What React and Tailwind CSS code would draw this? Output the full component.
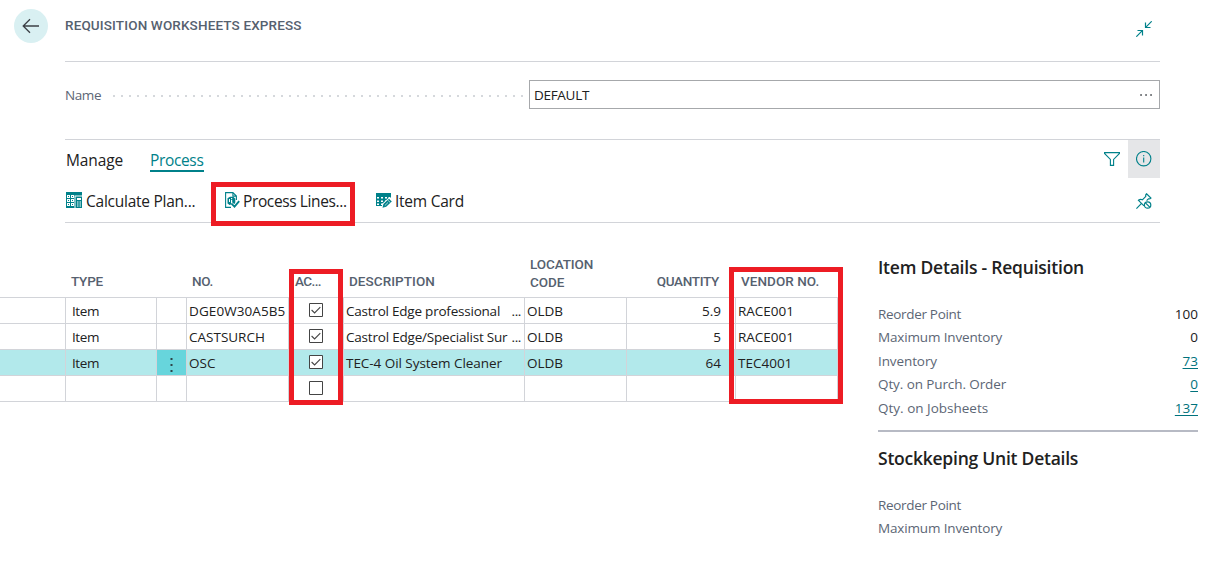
import React from "react";

const TEAL = "#00818a";

function BackIcon() {
  return (
    <svg width="18" height="16" viewBox="0 0 18 16" fill="none" stroke="#3c4046" strokeWidth="1.3">
      <path d="M17 8H1.5M8 1.2 1.2 8 8 14.8" />
    </svg>
  );
}

function CollapseIcon() {
  return (
    <svg width="16" height="16" viewBox="0 0 16 16" fill="none" stroke={TEAL} strokeWidth="1.2">
      <path d="M15.7.3 9.7 6.3M9.5 1.5v5h5M.3 15.7l6-6M1.5 9.5h5v5" />
    </svg>
  );
}

function FilterIcon() {
  return (
    <svg width="16" height="14" viewBox="0 0 16 14" fill="none" stroke={TEAL} strokeWidth="1.1">
      <path d="M.5.6h15v.9L9.6 7.4v6H6.4v-6L.5 1.500z" />
    </svg>
  );
}

function InfoIcon() {
  return (
    <svg width="16" height="16" viewBox="0 0 16 16" fill="none" stroke={TEAL} strokeWidth="1.1">
      <circle cx="7.7" cy="7.700" r="7.2" />
      <path d="M7.700 6.500v5M7.700 4v1.300" />
    </svg>
  );
}

function UnpinIcon() {
  return (
    <svg width="16" height="16" viewBox="0 0 16 16" fill="none" stroke={TEAL} strokeWidth="1.2">
      <path d="M.4 15.600 5.300 10.600M2 6.800l6 6M2.500 7.200c1.400-.9 2.700-.9 3.900-.4L9.800 3.400c-.3-1 0-1.900.8-2.600l4.300 4.300c-.7.800-1.500 1-2.500.8l-1.800 1.700" />
      <circle cx="11.600" cy="12" r="3.200" />
      <path d="m9.400 9.800 4.400 4.400" />
    </svg>
  );
}

function CalculateIcon() {
  return (
    <svg width="16" height="16" viewBox="0 0 16 16">
      <path fill={TEAL} d="M0 0h16v4H0zM0 4h9v12H0z" />
      <path fill="#fff" d="M1 3h3v3H1zM5 3h3v3H5zM1 7h3v3H1zM5 7h3v3H5zM1 11h3v3H1zM5 11h3v3H5z" />
      <path fill={TEAL} d="M2 4h1v1H2zM6 4h1v1H6zM2 8h1v1H2zM6 8h1v1H6zM2 12h1v1H2zM6 12h1v1H6z" />
      <path fill="#fff" d="M8.500 3.500H16V16H8.500z" />
      <path fill={TEAL} d="M9.500 4.500H16V16H9.500z" />
      <path fill="#fff" d="M11 6h4v2h-4zM11 9.500h1v1h-1zM12.500 9.500h1v1h-1zM14 9.500h1v1h-1zM11 11.500h1v1h-1zM12.500 11.500h1v1h-1zM14 11.500h1v1h-1zM11 13.500h1v1h-1zM12.500 13.500h1v1h-1zM14 13.500h1v1h-1z" />
    </svg>
  );
}

function ProcessIcon() {
  return (
    <svg width="15" height="16" viewBox="0 0 15 16" fill="none">
      <path stroke={TEAL} strokeWidth="1.100" d="M6 15.400H.6V.6h7.300l3.500 3.500v4M7.900.6v3.500h3.500" />
      <path fill={TEAL} d="M2.500 6.200 5 4.800h3.300l2 2v4.700L7.500 13H4.600l-2.100-1.600z" />
      <path fill="#fff" d="M4 7h1v3H4zM6 6h1.200v1.200H6zM6 8h1.200v3H6z" />
      <path stroke="#fff" strokeWidth="3" d="m6.500 11.500 2.800 3 4.600-5.500" />
      <path stroke={TEAL} strokeWidth="1.800" d="m6.500 11.700 3 3 4.700-5.600" />
    </svg>
  );
}

function ItemCardIcon() {
  return (
    <svg width="16" height="15" viewBox="0 0 16 15" fill="none">
      <path fill={TEAL} d="M0 0h15v13H0z" />
      <path fill="#fff" d="M1 4h2v1.500H1zM5 4h2v1.500H5zM9 4h2v1.500H9zM12.500 4h1.500v1.500h-1.500zM1 7.500h2V9H1zM5 7.500h2V9H5zM9 7.500h1V9H9zM1 10.500h2V12H1zM5 10.500h2V12H5z" />
      <path fill="#fff" d="M5.500 15 6.500 10.500 13 4.500h3v9.500l-2 1z" />
      <path fill={TEAL} d="m6.500 14.700.9-3.600 5.600-5.300 2.800 2.600-5.600 5.300z" />
      <path stroke="#fff" strokeWidth=".7" d="m11.600 7 2.700 2.500M8.800 12.600l3.200-3.100" />
    </svg>
  );
}

function Checkbox({ checked }) {
  return (
    <svg width="14" height="14" viewBox="0 0 14 14" fill="none" className="-mt-px -ml-px">
      <path fill="#fff" stroke="#444" d="M.5.5h13v13H.5z" />
      {checked && <path stroke="#444" strokeWidth="1.100" d="m2.600 7 3 3 5.700-5.900" />}
    </svg>
  );
}

function HeadCell({ className, children }) {
  return (
    <div className={`flex shrink-0 items-end pb-[7px] font-[Roboto] text-[13.5px] leading-[18px] font-medium text-[#56616f] ${className}`}>
      {children}
    </div>
  );
}

function Cell({ className = "", children }) {
  return (
    <div className={`flex shrink-0 items-center border-r border-[#d2d4d9] whitespace-pre ${className}`}>
      {children}
    </div>
  );
}

const rows = [
  { type: "Item", no: "DGE0W30A5B5", noCls: "tracking-[0.09px]", ok: true, desc: "Castrol Edge professional", descCls: "tracking-[-0.22px]", more: true, loc: "OLDB", qty: "5.9", vendor: "RACE001" },
  { type: "Item", no: "CASTSURCH", noCls: "tracking-[0px]", ok: true, desc: "Castrol Edge/Specialist Sur", descCls: "tracking-[-0.2px]", more: true, loc: "OLDB", qty: "5", vendor: "RACE001" },
  { type: "Item", no: "OSC", noCls: "tracking-[0px]", ok: true, desc: "TEC-4 Oil System Cleaner", descCls: "tracking-[-0.05px]", loc: "OLDB", qty: "64", vendor: "TEC4001", selected: true },
  { ok: false },
];

function Row({ r }) {
  return (
    <div className={`flex h-[26px] border-b border-[#d2d4d9] ${r.selected ? "bg-[#b2e9eb]" : ""}`}>
      <Cell className="w-[66px]" />
      <Cell className="w-[91px] pl-[6px] tracking-[-0.4px]">{r.type}</Cell>
      <Cell className={`w-[30px] justify-center ${r.selected ? "bg-[#67d5dc]" : ""}`}>
        {r.selected && (
          <svg width="3" height="14" viewBox="0 0 3 14" className="mt-[5px]" fill="#2f4448">
            <path d="M.5 0h2v2h-2zM.5 6h2v2h-2zM.5 12h2v2h-2z" />
          </svg>
        )}
      </Cell>
      <Cell className={`w-[102px] pl-[2px] ${r.noCls || ""}`}>{r.no}</Cell>
      <Cell className="w-[55px] justify-center">
        <Checkbox checked={r.ok} />
      </Cell>
      <Cell className="w-[181px] justify-between pr-[3px] pl-[2px]">
        <span className={r.descCls}>{r.desc}</span>
        {r.more && <span className="tracking-[-0.4px]">...</span>}
      </Cell>
      <Cell className="w-[102px] pl-[2px]">{r.loc}</Cell>
      <Cell className="w-[109px] justify-end pr-[14px]">{r.qty}</Cell>
      <Cell className="w-[102px] pl-[2px]">{r.vendor}</Cell>
    </div>
  );
}

function Fact({ label, value, link, className = "" }) {
  return (
    <div className={`flex h-[23.4px] items-center justify-between`}>
      <span className={`text-[#5c6675] ${className}`}>{label}</span>
      {value && (
        <span className={link ? "text-[#00727c] underline decoration-1 underline-offset-[2px]" : "text-[#212121]"}>{value}</span>
      )}
    </div>
  );
}

export default function App() {
  return (
    <div className="relative flex h-[571px] w-[1221px] flex-col overflow-hidden bg-white font-['Open_Sans',sans-serif] text-[13.5px] leading-[20px] text-[#212121]">
      <header className="flex h-[62px]">
        <div className="w-[65px] shrink-0 pt-[9px] pl-[14px]">
          <button className="flex h-[34px] w-[34px] items-center justify-center rounded-full bg-[#d9f0f2]">
            <BackIcon />
          </button>
        </div>
        <div className="flex w-[1095px] justify-between border-b border-[#d2d4d9]">
          <h1 className="mt-[16px] font-[Roboto] text-[13.5px] leading-[18px] font-medium tracking-[0.14px] text-[#56616f]">
            REQUISITION WORKSHEETS EXPRESS
          </h1>
          <div className="pt-[21px] pr-[8px]">
            <CollapseIcon />
          </div>
        </div>
      </header>

      <section className="ml-[65px] flex h-[77px] w-[1095px] pt-[18px]">
        <div className="flex h-[29px] w-[464px] items-center">
          <span className="w-[48px] tracking-[-0.42px] text-[#5c6675]">Name</span>
          <svg width="411" height="2" viewBox="0 0 411 2" className="mt-[2px]">
            <path d="M0 1H411" stroke="#d5d8dc" strokeWidth="2" strokeDasharray="2 6" />
          </svg>
        </div>
        <div className="flex h-[29px] w-[631px] items-center justify-between border border-[#a6a8ab] pr-[7px] pl-[4px]">
          <span className="tracking-[-0.3px]">DEFAULT</span>
          <svg width="12" height="2" viewBox="0 0 12 2" className="mt-px" fill="#30343a">
            <path d="M.3.200h1.500v1.500H.3zM5.300.200h1.500v1.500H5.300zM10.300.200h1.500v1.500h-1.500z" />
          </svg>
        </div>
      </section>

      <section className="ml-[65px] flex h-[84px] w-[1095px] flex-col border-y border-[#d2d4d9] text-[15.5px]">
        <div className="flex h-[38px] justify-between">
          <nav className="flex pt-[10px] pl-px">
            <span className="w-[84px] tracking-[-0.1px]">Manage</span>
            <span className="h-[22px] w-[54px] border-b-2 border-[#00818a] tracking-[-0.35px] text-[#00818a]">Process</span>
          </nav>
          <div className="flex">
            <div className="flex w-[33px] items-center pl-[9px]">
              <FilterIcon />
            </div>
            <div className="flex w-[32px] items-center justify-center bg-[#e5e6e8]">
              <InfoIcon />
            </div>
          </div>
        </div>
        <div className="flex h-[44px] items-center pl-px">
          <div className="flex w-[159px] items-center gap-[4px]">
            <CalculateIcon />
            <span className="mt-[2px] tracking-[-0.25px]">Calculate Plan...</span>
          </div>
          <div className="flex w-[151px] items-center gap-[3px]">
            <ProcessIcon />
            <span className="mt-[2px] tracking-[-0.38px]">Process Lines...</span>
          </div>
          <div className="flex items-center gap-[3px]">
            <ItemCardIcon />
            <span className="mt-[2px] tracking-[-0.25px]">Item Card</span>
          </div>
          <div className="ml-auto pt-px pr-[8px]">
            <UnpinIcon />
          </div>
        </div>
      </section>

      <main className="flex">
        <div className="w-[838px] shrink-0">
          <div className="flex h-[75px] border-b border-[#d2d4d9]">
            <HeadCell className="w-[66px]" />
            <HeadCell className="w-[121px] pl-[5px] tracking-[-0.21px]">TYPE</HeadCell>
            <HeadCell className="w-[102px] pl-[5px] tracking-[-0.3px]">NO.</HeadCell>
            <HeadCell className="w-[55px] pl-[6px] tracking-[-0.58px]">AC...</HeadCell>
            <HeadCell className="w-[181px] pl-[5px] tracking-[0.06px]">DESCRIPTION</HeadCell>
            <HeadCell className="w-[102px] flex-col !items-start justify-end !pb-[6px] pl-[5px] tracking-[-0.1px]">
              <span>LOCATION</span>
              <span>CODE</span>
            </HeadCell>
            <HeadCell className="w-[109px] justify-end pr-[17px] tracking-[-0.3px]">QUANTITY</HeadCell>
            <HeadCell className="w-[102px] pl-[5px] tracking-[0.05px]">VENDOR NO.</HeadCell>
          </div>
          {rows.map((r, i) => (
            <Row key={i} r={r} />
          ))}
        </div>

        <aside className="ml-[40px] w-[320px] pt-[32px]">
          <h2 className="text-[17.5px] leading-[24px] font-semibold tracking-[-0.22px]">Item Details - Requisition</h2>
          <div className="mt-[23.4px]">
            <Fact label="Reorder Point" value="100" className="tracking-[-0.32px]" />
            <Fact label="Maximum Inventory" value="0" className="tracking-[-0.15px]" />
            <Fact label="Inventory" value="73" link className="tracking-[-0.1px]" />
            <Fact label="Qty. on Purch. Order" value="0" link className="tracking-[-0.1px]" />
            <Fact label="Qty. on Jobsheets" value="137" link />
          </div>
          <div className="mt-[10.6px] h-[2px] bg-[#b7bac4]" />
          <h2 className="mt-[14px] text-[17.5px] leading-[24px] font-semibold tracking-[-0.24px]">Stockkeping Unit Details</h2>
          <div className="mt-[23px]">
            <Fact label="Reorder Point" className="tracking-[-0.32px]" />
            <Fact label="Maximum Inventory" className="tracking-[-0.15px]" />
          </div>
        </aside>
      </main>

      <div className="absolute top-[182px] left-[211px] h-[44px] w-[144px] border-5 border-[#ed1c24]" />
      <div className="absolute top-[269px] left-[289px] h-[136px] w-[54px] border-5 border-[#ed1c24]" />
      <div className="absolute top-[267px] left-[729px] h-[137px] w-[114px] border-5 border-[#ed1c24]" />
    </div>
  );
}
